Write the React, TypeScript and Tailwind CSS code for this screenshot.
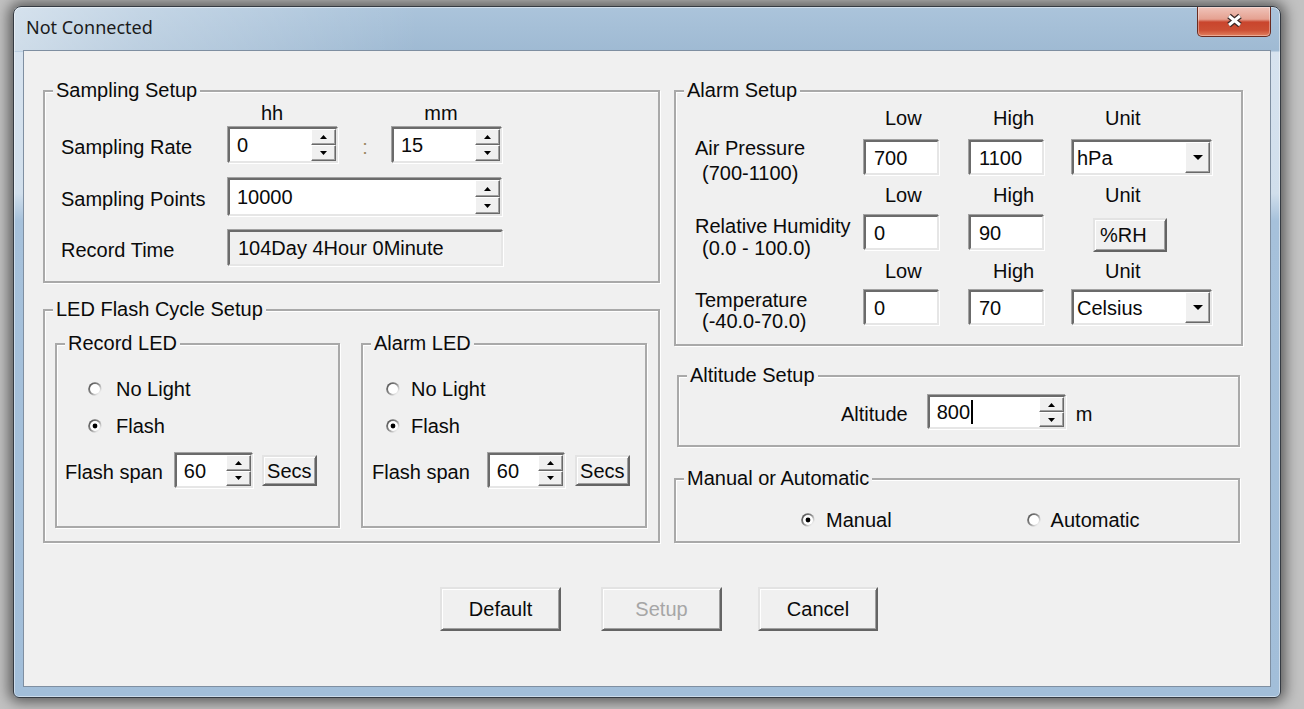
import { useId, type ReactNode } from 'react';

// classic 3D edges
const sunken =
  'border-2 border-t-[#6b6b6b] border-l-[#6b6b6b] border-r-[#e6e6e6] border-b-[#e6e6e6] shadow-[-1px_-1px_0_#a3a3a3,1px_1px_0_#ffffff]';
const raised =
  'border-2 border-t-[#e3e3e3] border-l-[#e3e3e3] border-r-[#646464] border-b-[#646464] shadow-[inset_1px_1px_0_#ffffff,inset_-1px_-1px_0_#a0a0a0]';
const raisedThin =
  'border border-t-white border-l-white border-r-[#696969] border-b-[#696969] shadow-[inset_-1px_-1px_0_#a0a0a0]';

const Group = ({
  title,
  className = '',
  children,
}: {
  title: string;
  className?: string;
  children?: ReactNode;
}) => (
  <div
    className={`relative border-2 border-[#a9a9a9] shadow-[inset_1px_1px_0_#ffffff,1px_1px_0_#ffffff] ${className}`}
  >
    <span className="absolute -top-[12px] left-[8px] whitespace-nowrap bg-[#f0f0f0] px-[3px] leading-[20px]">
      {title}
    </span>
    {children}
  </div>
);

const Arrow = ({ up }: { up?: boolean }) => (
  <div className={`flex flex-1 items-center justify-center bg-[#f0f0f0] ${raisedThin}`}>
    <svg width="7" height="4" viewBox="0 0 7 4">
      <path d={up ? 'M3.5 0L7 4H0Z' : 'M0 0H7L3.5 4Z'} fill="#000" />
    </svg>
  </div>
);

const Spin = ({
  value,
  className,
  caret,
}: {
  value: string;
  className: string;
  caret?: boolean;
}) => (
  <div className={`flex bg-white ${sunken} ${className}`}>
    <div className="flex flex-1 items-center pl-[7px]">
      {value}
      {caret && <span className="ml-[1px] h-[24px] w-[2px] bg-black" />}
    </div>
    <div className="flex w-[25px] flex-col">
      <Arrow up />
      <Arrow />
    </div>
  </div>
);

const Field = ({ value, className = '' }: { value: string; className?: string }) => (
  <div className={`flex h-[35px] w-[75px] items-center bg-white pl-[8px] ${sunken} ${className}`}>
    {value}
  </div>
);

const Combo = ({ value, className = '' }: { value: string; className?: string }) => (
  <div className={`flex h-[35px] w-[140px] bg-white ${sunken} ${className}`}>
    <div className="flex flex-1 items-center pl-[3px]">{value}</div>
    <div className={`flex w-[25px] items-center justify-center bg-[#f0f0f0] ${raisedThin}`}>
      <svg width="10" height="5" viewBox="0 0 10 5">
        <path d="M0 0H10L5 5Z" fill="#000" />
      </svg>
    </div>
  </div>
);

const Radio = ({ checked }: { checked?: boolean }) => {
  const id = useId();
  return (
    <svg width="14" height="14" viewBox="0 0 14 14" className="shrink-0">
      <defs>
        <linearGradient id={id} x1="0" y1="0.2" x2="0.9" y2="1">
          <stop offset="0" stopColor="#4f4f4f" />
          <stop offset="0.45" stopColor="#8c8c8c" />
          <stop offset="0.8" stopColor="#e6e6e6" />
          <stop offset="1" stopColor="#ffffff" />
        </linearGradient>
      </defs>
      <circle cx="7" cy="7" r="6.8" fill={`url(#${id})`} />
      <circle cx="7" cy="7" r="5" fill="#ffffff" />
      {checked && <circle cx="7" cy="7" r="2.4" fill="#000" />}
    </svg>
  );
};

const Button = ({ children, className = '' }: { children: ReactNode; className?: string }) => (
  <div className={`flex items-center justify-center bg-[#f0f0f0] ${raised} ${className}`}>
    {children}
  </div>
);

const CloseButton = () => (
  <div className="ml-auto flex h-[30px] w-[74px] items-center justify-center rounded-b-[5px] border border-t-0 border-[#6a2b20] bg-[linear-gradient(to_bottom,#f0c4ba_0%,#e5a191_42%,#c9452d_52%,#cc4f34_80%,#e2805f_100%)] pb-[2px] shadow-[inset_0_0_0_1px_rgba(255,255,255,0.35)]">
    <svg width="19" height="15" viewBox="0 0 19 15">
      <path d="M4 3L15 12M15 3L4 12" stroke="#3a2826" strokeWidth="5.5" />
      <path d="M4 3L15 12M15 3L4 12" stroke="#ffffff" strokeWidth="3" />
    </svg>
  </div>
);

const LedBox = ({
  title,
  className,
  radioPad,
  radioGap,
  spanPad,
  spinGap,
  spinW,
  secsGap,
}: {
  title: string;
  className: string;
  radioPad: string;
  radioGap: string;
  spanPad: string;
  spinGap: string;
  spinW: string;
  secsGap: string;
}) => (
  <Group title={title} className={className}>
    <div className={`mt-[32px] flex h-[24px] items-center ${radioPad}`}>
      <Radio />
      <span className={radioGap}>No Light</span>
    </div>
    <div className={`mt-[13px] flex h-[24px] items-center ${radioPad}`}>
      <Radio checked />
      <span className={radioGap}>Flash</span>
    </div>
    <div className={`mt-[15px] flex h-[35px] items-center ${spanPad}`}>
      <span className="whitespace-nowrap pt-[3px]">Flash span</span>
      <Spin value="60" className={`h-[35px] ${spinW} ${spinGap}`} />
      <Button className={`h-[31px] w-[55px] ${secsGap}`}>Secs</Button>
    </div>
  </Group>
);

export default function App() {
  return (
    <div className="h-[709px] w-[1304px] overflow-hidden bg-[#c2c2c2] pl-[13px] pt-[6px] font-['Liberation_Sans',Arial,sans-serif] text-[20px] leading-[20px] text-[#0a0a0a]">
      <div className="flex h-[692px] w-[1268px] flex-col rounded-t-[8px] rounded-b-[6px] border border-[#353b43] bg-[linear-gradient(to_right,rgba(255,255,255,0.5)_0%,rgba(255,255,255,0.3)_10%,rgba(255,255,255,0)_32%),linear-gradient(to_bottom,#abc4db_0%,#9fbad3_6.3%,#d7e3ef_6.6%,#d1dfec_27%,#a6c1db_31%,#a2bed9_100%)] bg-no-repeat px-[9px] pb-[10px] shadow-[0_0_14px_4px_rgba(0,0,0,0.55),inset_0_0_0_1px_rgba(255,255,255,0.45)] [background-size:100%_44px,100%_100%]">
        {/* title bar */}
        <div className="flex h-[43px] shrink-0 items-start">
          <span className="ml-[3px] mt-[10px] font-['Noto_Sans',sans-serif] text-[18px] leading-[20px] text-[#1b1b1b]">
            Not Connected
          </span>
          <CloseButton />
        </div>

        {/* client area */}
        <div className="flex flex-1 flex-col border border-[#7f8fa1] bg-[#f0f0f0]">
          <div className="flex pt-[39px]">
            {/* left column */}
            <div className="ml-[19px] flex w-[617px] flex-col">
              <Group title="Sampling Setup" className="h-[193px]">
                <div className="ml-[216px] mt-[11px] flex h-[20px]">
                  <span>hh</span>
                  <span className="ml-[141px]">mm</span>
                </div>
                <div className="mt-[4px] flex h-[36px] items-center pl-[16px]">
                  <span className="w-[167px] pt-[3px]">Sampling Rate</span>
                  <Spin value="0" className="h-[36px] w-[110px]" />
                  <span className="w-[54px] pt-[3px] text-center text-[#9c8a66]">:</span>
                  <Spin value="15" className="h-[36px] w-[110px]" />
                </div>
                <div className="mt-[15px] flex h-[38px] items-center pl-[16px]">
                  <span className="w-[167px] whitespace-nowrap pt-[3px]">Sampling Points</span>
                  <Spin value="10000" className="h-[38px] w-[274px]" />
                </div>
                <div className="mt-[14px] flex h-[36px] items-center pl-[16px]">
                  <span className="w-[167px] pt-[3px]">Record Time</span>
                  <div className={`flex h-[36px] w-[275px] items-center bg-[#f0f0f0] pl-[8px] ${sunken}`}>
                    104Day 4Hour 0Minute
                  </div>
                </div>
              </Group>

              <Group title="LED Flash Cycle Setup" className="mt-[26px] h-[234px]">
                <div className="ml-[10px] mt-[32px] flex">
                  <LedBox
                    title="Record LED"
                    className="h-[185px] w-[285px]"
                    radioPad="pl-[31px]"
                    radioGap="ml-[14px]"
                    spanPad="pl-[8px]"
                    spinGap="ml-[12px]"
                    spinW="w-[78px]"
                    secsGap="ml-[9px]"
                  />
                  <LedBox
                    title="Alarm LED"
                    className="ml-[21px] h-[185px] w-[286px]"
                    radioPad="pl-[23px]"
                    radioGap="ml-[11px]"
                    spanPad="pl-[9px]"
                    spinGap="ml-[18px]"
                    spinW="w-[77px]"
                    secsGap="ml-[10px]"
                  />
                </div>
              </Group>
            </div>

            {/* right column */}
            <div className="ml-[14px] flex w-[569px] flex-col">
              <Group title="Alarm Setup" className="h-[256px]">
                {/* air pressure */}
                <div className="ml-[19px] mt-[16px] flex h-[77px] items-start">
                  <div className="w-[169px] whitespace-nowrap pt-[30px]">
                    <div>Air Pressure</div>
                    <div className="mt-[5px] pl-[7px]">(700-1100)</div>
                  </div>
                  <div className="w-[75px]">
                    <div className="pl-[21px]">Low</div>
                    <Field value="700" className="mt-[12px]" />
                  </div>
                  <div className="ml-[30px] w-[75px]">
                    <div className="pl-[24px]">High</div>
                    <Field value="1100" className="mt-[12px]" />
                  </div>
                  <div className="ml-[28px] w-[140px]">
                    <div className="pl-[33px]">Unit</div>
                    <Combo value="hPa" className="mt-[12px]" />
                  </div>
                </div>
                {/* humidity */}
                <div className="ml-[19px] flex h-[76px] items-start">
                  <div className="w-[169px] whitespace-nowrap pt-[31px]">
                    <div>Relative Humidity</div>
                    <div className="mt-[2px] pl-[7px]">(0.0 - 100.0)</div>
                  </div>
                  <div className="w-[75px]">
                    <div className="pl-[21px]">Low</div>
                    <Field value="0" className="mt-[10px]" />
                  </div>
                  <div className="ml-[30px] w-[75px]">
                    <div className="pl-[24px]">High</div>
                    <Field value="90" className="mt-[10px]" />
                  </div>
                  <div className="ml-[28px] w-[140px]">
                    <div className="pl-[33px]">Unit</div>
                    <Button className="ml-[21px] mt-[13px] h-[34px] w-[74px] !justify-start pl-[5px]">
                      %RH
                    </Button>
                  </div>
                </div>
                {/* temperature */}
                <div className="ml-[19px] flex items-start">
                  <div className="w-[169px] whitespace-nowrap pt-[29px]">
                    <div>Temperature</div>
                    <div className="mt-[1px] pl-[7px]">(-40.0-70.0)</div>
                  </div>
                  <div className="w-[75px]">
                    <div className="pl-[21px]">Low</div>
                    <Field value="0" className="mt-[9px]" />
                  </div>
                  <div className="ml-[30px] w-[75px]">
                    <div className="pl-[24px]">High</div>
                    <Field value="70" className="mt-[9px]" />
                  </div>
                  <div className="ml-[28px] w-[140px]">
                    <div className="pl-[33px]">Unit</div>
                    <Combo value="Celsius" className="mt-[9px]" />
                  </div>
                </div>
              </Group>

              <Group title="Altitude Setup" className="ml-[3px] mt-[29px] h-[72px] w-[563px]">
                <div className="mt-[18px] flex h-[34px] items-center pl-[162px]">
                  <span className="pt-[3px]">Altitude</span>
                  <Spin value="800" caret className="ml-[20px] h-[34px] w-[138px]" />
                  <span className="ml-[10px] pt-[3px]">m</span>
                </div>
              </Group>

              <Group title="Manual or Automatic" className="mt-[31px] h-[65px] w-[566px]">
                <div className="mt-[28px] flex h-[24px] items-center pl-[125px]">
                  <Radio checked />
                  <span className="ml-[11px]">Manual</span>
                  <span className="ml-[135px] flex">
                    <Radio />
                  </span>
                  <span className="ml-[10px]">Automatic</span>
                </div>
              </Group>
            </div>
          </div>

          {/* buttons */}
          <div className="ml-[416px] mt-[44px] flex">
            <Button className="h-[44px] w-[121px]">Default</Button>
            <Button className="ml-[40px] h-[44px] w-[121px] text-[#a6a6a6]">Setup</Button>
            <Button className="ml-[36px] h-[44px] w-[120px]">Cancel</Button>
          </div>
        </div>
      </div>
    </div>
  );
}
